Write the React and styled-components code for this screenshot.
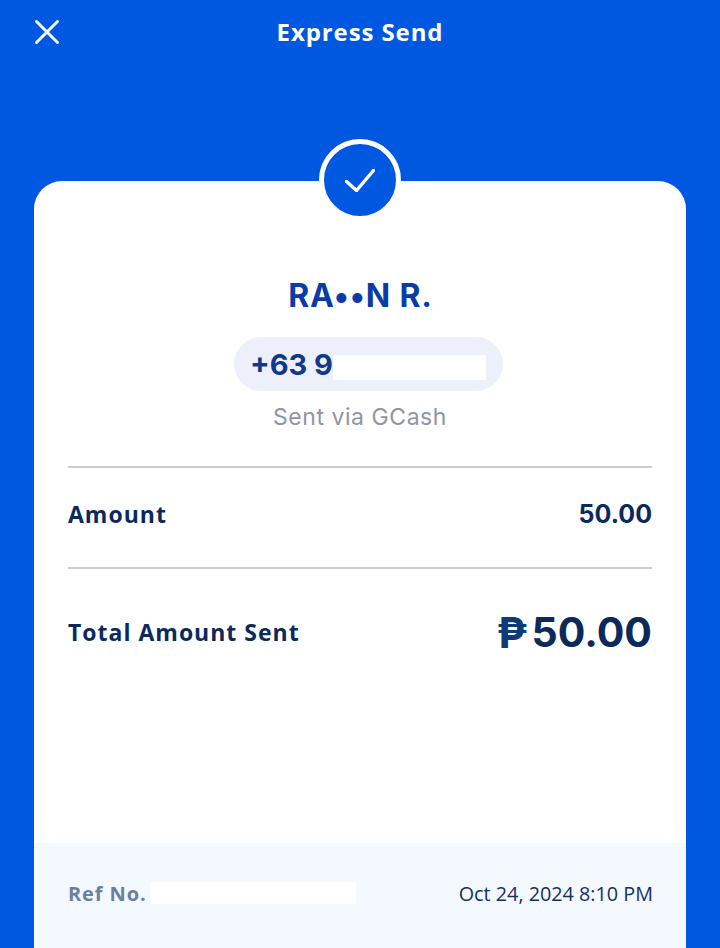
import { createGlobalStyle, styled } from "styled-components";

const NAVY = "#0b2a5b";
const BLUE = "#0057e0";

export default function App () {
  return (
    <Page >
      <GlobalStyle />
      <Header >
        <CloseBtn type="button" aria-label="Close">
          <svg width="28" height="28" viewBox="0 0 28 28" fill="none" stroke="#fff" strokeWidth="3" strokeLinecap="round">
            <path d="M3.5 3.5 L24.5 24.5 M24.5 3.5 L3.5 24.5" />
          </svg>
        </CloseBtn>
        <Title >Express Send</Title>
      </Header>

      <Card >
        <Badge >
          <svg width="30" height="23" viewBox="0 0 30 23" fill="none" stroke="#fff" strokeWidth="3.4" strokeLinecap="round" strokeLinejoin="round">
            <path d="M1.5 12.5 L11.5 21.5 L28.5 1.5" />
          </svg>
        </Badge>

        <Recipient >
          <Name >RA••N R.</Name>
          <PhonePill >
            <PhoneText >+63 9</PhoneText>
            <PhoneRedaction $width={153} $height={25} />
          </PhonePill>
          <Via >Sent via GCash</Via>
        </Recipient>

        <Row $height={101} $shift={7}>
          <RowLabel >Amount</RowLabel>
          <RowValue >50.00</RowValue>
        </Row>
        <Row $height={128} $shift={2} $last>
          <RowLabel >Total Amount Sent</RowLabel>
          <Total >
            <Peso >₱</Peso>
            50.00
          </Total>
        </Row>

        <Footer >
          <RefWrap >
            <RefLabel >Ref No.</RefLabel>
            <Redaction $width={206} $height={22} />
          </RefWrap>
          <DateText >Oct 24, 2024 8:10 PM</DateText>
        </Footer>
      </Card>
    </Page>
  );
}

const GlobalStyle = createGlobalStyle`
  html, body {
    margin: 0;
    padding: 0;
  }

  body {
    font-family: "Inter", "Noto Sans", sans-serif;
  }
`;

const Page = styled.div`
  background-color: ${BLUE};
  box-sizing: border-box;
  display: flex;
  flex-direction: column;
  height: 948px;
  overflow: hidden;
  padding: 0 34px;
  width: 720px;
`;

const Header = styled.header`
  align-items: center;
  box-sizing: border-box;
  display: flex;
  flex: 0 0 181px;
  flex-direction: column;
  padding-top: 17px;
  position: relative;
`;

const CloseBtn = styled.button`
  background: transparent;
  border: none;
  display: flex;
  left: -1px;
  padding: 0;
  position: absolute;
  top: 18px;
`;

const Title = styled.h1`
  color: #fff;
  font-family: "Open Sans", sans-serif;
  font-size: 24px;
  font-weight: 700;
  letter-spacing: .9px;
  line-height: 30px;
  margin: 0;
`;

const Card = styled.main`
  background-color: #fff;
  border-radius: 28px 28px 0 0;
  display: flex;
  flex: 1;
  flex-direction: column;
  position: relative;
`;

const Badge = styled.div`
  align-items: center;
  background-color: ${BLUE};
  border: 5px solid #fff;
  border-radius: 50%;
  box-sizing: border-box;
  display: flex;
  height: 82px;
  justify-content: center;
  left: 285px;
  position: absolute;
  top: -42px;
  width: 82px;
`;

const Recipient = styled.section`
  align-items: center;
  border-bottom: 2px solid #c9cbd0;
  display: flex;
  flex-direction: column;
  margin: 0 34px;
  padding: 93px 0 34px;
`;

const Name = styled.div`
  color: #0a3ca8;
  font-size: 32px;
  font-weight: 700;
  letter-spacing: .85px;
  line-height: 44px;
  margin-left: 1px;
`;

const PhonePill = styled.div`
  align-items: center;
  background-color: #edf0fa;
  border-radius: 27px;
  box-sizing: border-box;
  color: #0f3a8c;
  display: flex;
  height: 54px;
  margin-left: 17px;
  margin-top: 19px;
  padding-left: 16px;
  width: 269px;
`;

const PhoneText = styled.span`
  flex: 0 0 82px;
  font-size: 29px;
  font-weight: 700;
  white-space: nowrap;
`;

const Redaction = styled.div`
  background-color: #fff;
  height: ${({ $height }) => $height}px;
  width: ${({ $width }) => $width}px;
`;

const PhoneRedaction = styled(Redaction)`
  margin-top: 7px;
`;

const Via = styled.div`
  color: #8e95a5;
  font-size: 23px;
  letter-spacing: .55px;
  line-height: 30px;
  margin-top: 11px;
`;

const Row = styled.div`
  align-items: center;
  border-bottom: ${({ $last }) => ($last ? "none" : "2px solid #c9cbd0")};
  box-sizing: border-box;
  display: flex;
  height: ${({ $height }) => $height}px;
  justify-content: space-between;
  margin: 0 34px;
  padding-bottom: ${({ $shift }) => $shift}px;
`;

const RowLabel = styled.span`
  color: ${NAVY};
  font-family: "Open Sans", sans-serif;
  font-size: 23px;
  font-weight: 700;
  letter-spacing: 1px;
`;

const RowValue = styled.span`
  color: ${NAVY};
  font-size: 25px;
  font-weight: 700;
`;

const Total = styled.span`
  align-items: center;
  color: ${NAVY};
  display: flex;
  font-size: 41px;
  font-weight: 700;
  gap: 4px;
`;

const Peso = styled.span`
  color: #0f3a78;
  font-size: 43px;
`;

const Footer = styled.footer`
  align-items: center;
  background-color: #f4f8ff;
  box-sizing: border-box;
  display: flex;
  height: 105px;
  justify-content: space-between;
  margin-top: auto;
  padding: 0 33px 5px 34px;
`;

const RefWrap = styled.div`
  align-items: center;
  display: flex;
  gap: 3px;
`;

const RefLabel = styled.span`
  color: #6d7f9f;
  font-family: "Open Sans", sans-serif;
  font-size: 20px;
  font-weight: 700;
  letter-spacing: .9px;
`;

const DateText = styled.span`
  color: #16305f;
  font-family: "Open Sans", sans-serif;
  font-size: 19.8px;
  font-weight: 500;
`;
